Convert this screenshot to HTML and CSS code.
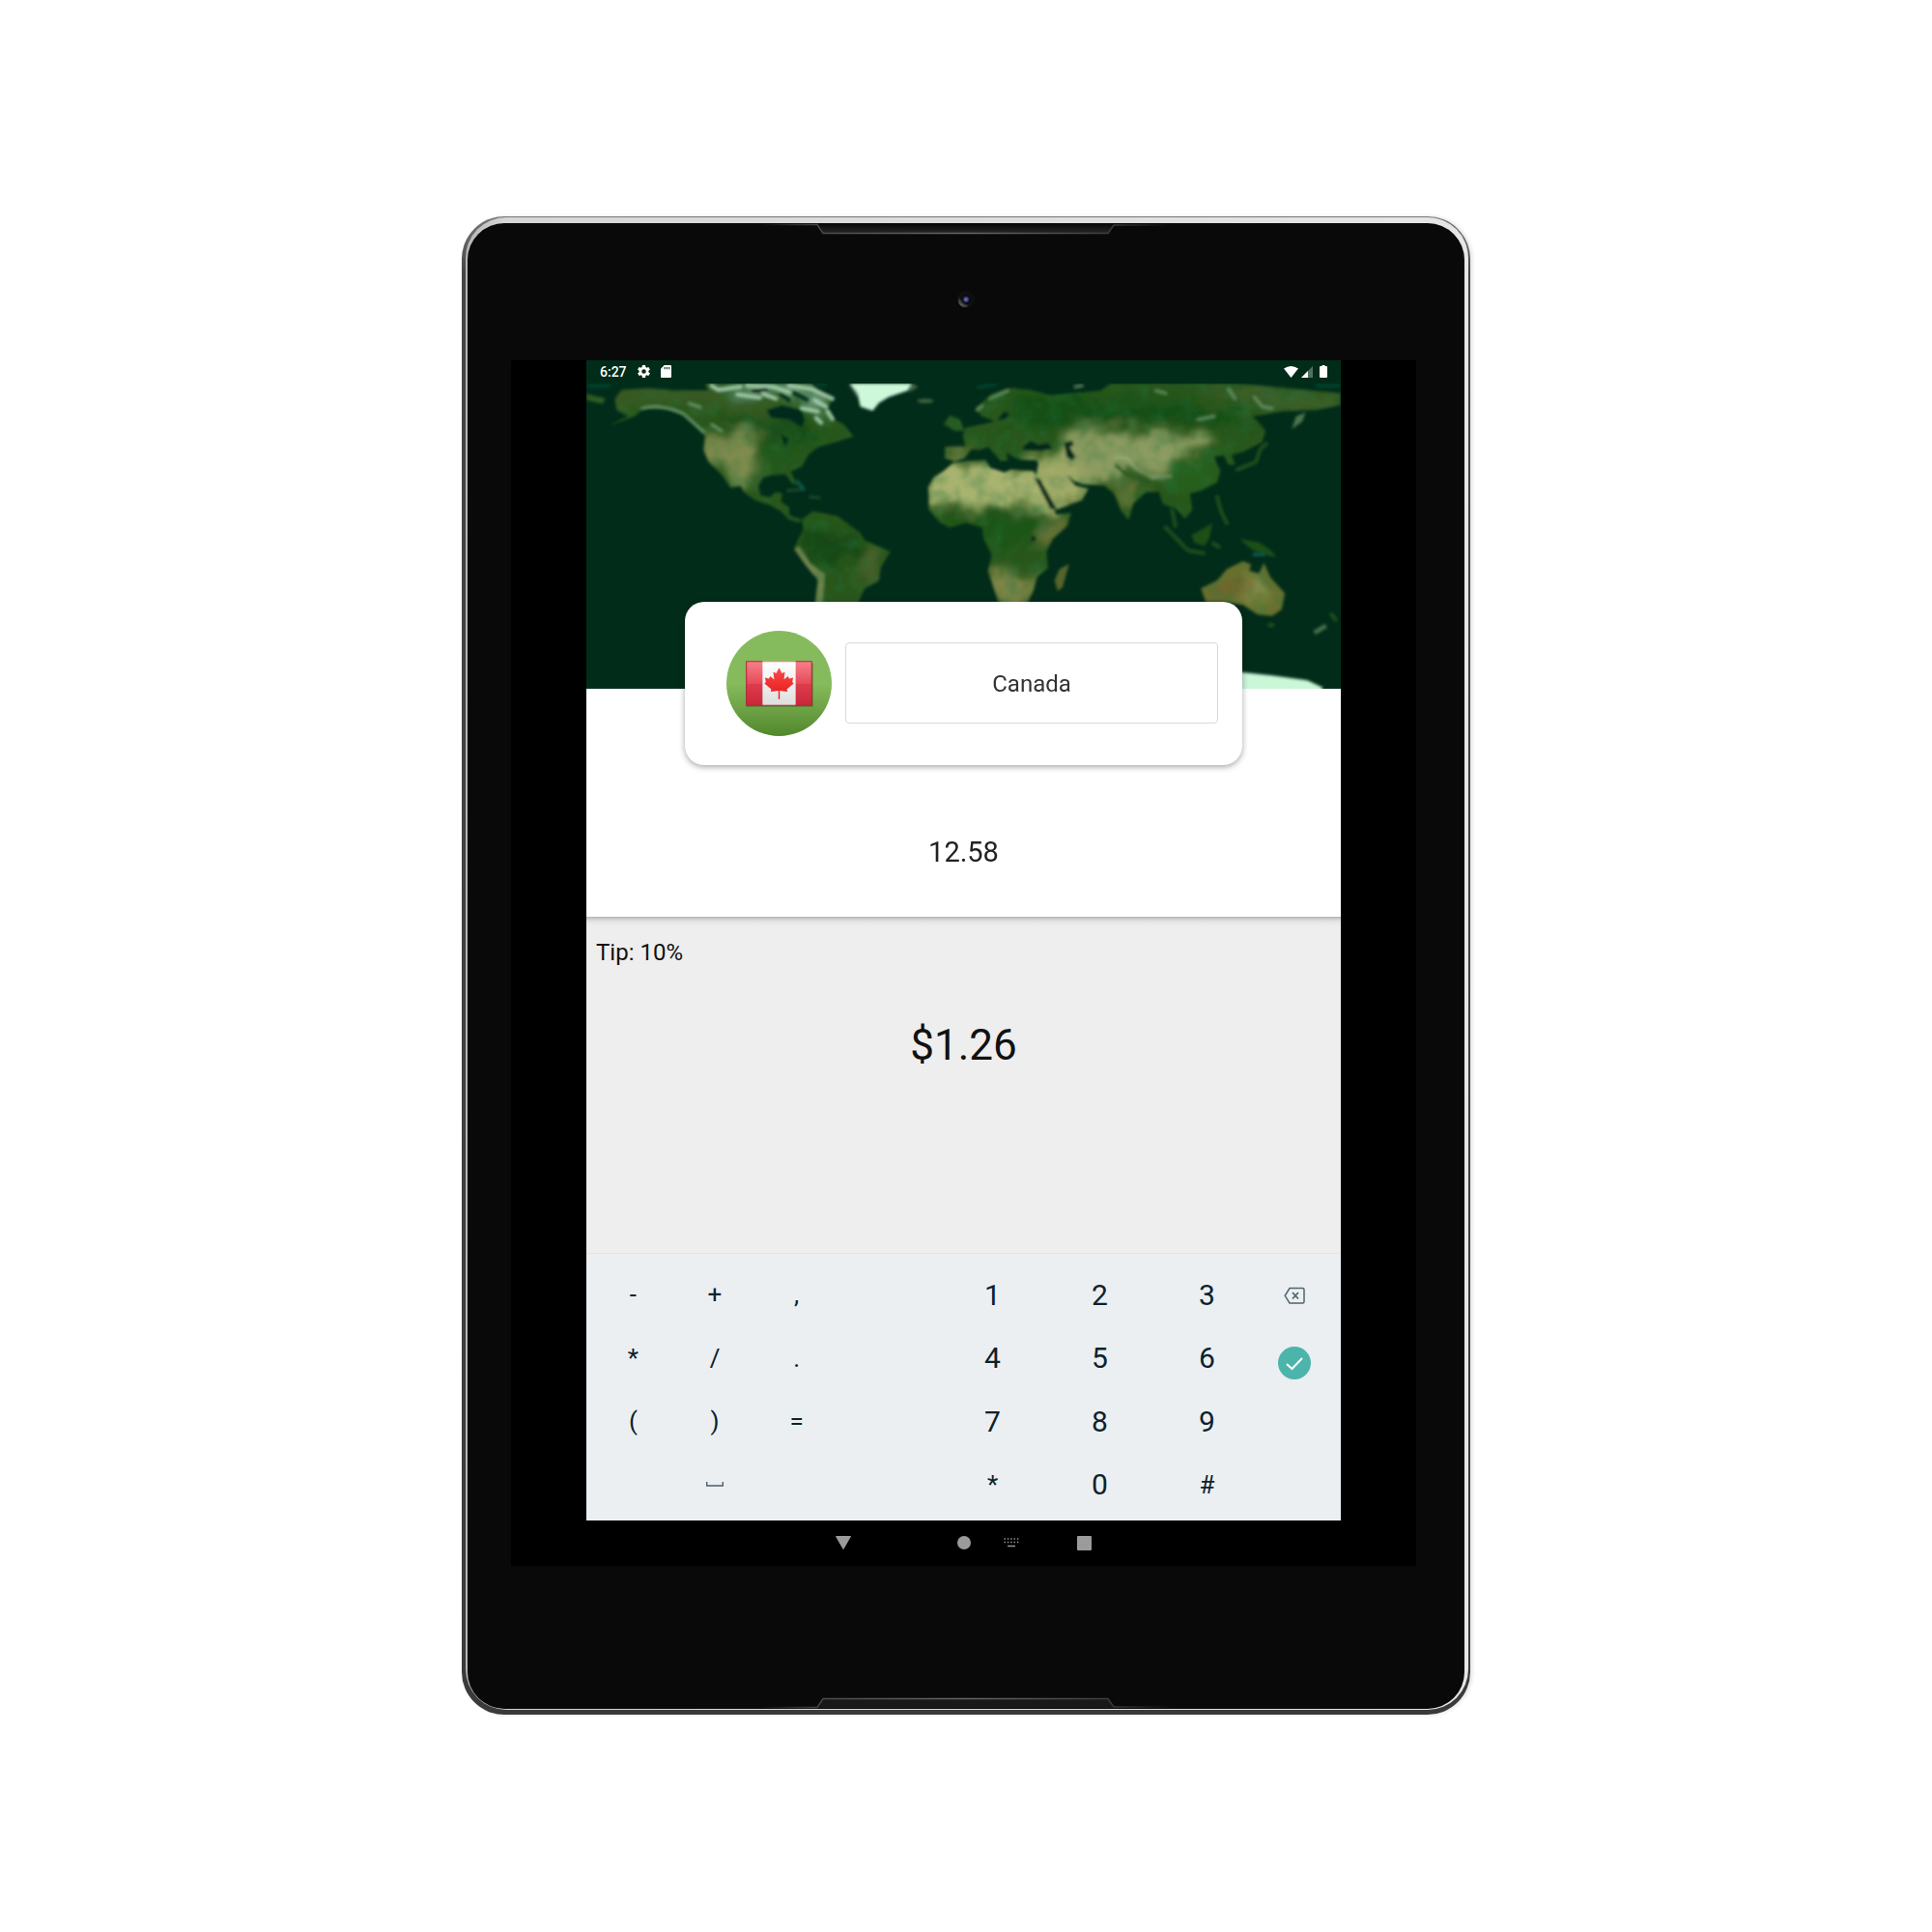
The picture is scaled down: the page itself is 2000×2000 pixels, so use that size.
FILE: index.html
```html
<!DOCTYPE html>
<html lang="en">
<head>
<meta charset="utf-8">
<meta name="viewport" content="width=device-width, initial-scale=1">
<title>Tip calculator</title>
<link rel="stylesheet" href="styles.css">
</head>
<body>
<div class="device">
  <div class="rim">
    <div class="face">
      <div class="bezel bezel-top">
        <svg class="speaker" viewBox="0 0 430 12" width="430" height="12" aria-hidden="true">
          <defs>
            <linearGradient id="grille" x1="0" y1="0" x2="0" y2="1"><stop offset="0" stop-color="#080808"/><stop offset="1" stop-color="#292929"/></linearGradient>
            <linearGradient id="edge"><stop offset="0" stop-color="#090909"/><stop offset=".15" stop-color="#4b4b4b"/><stop offset=".5" stop-color="#666"/><stop offset=".85" stop-color="#3c3c3c"/><stop offset="1" stop-color="#090909"/></linearGradient>
          </defs>
          <path d="M62 1L68 11H362L368 1Z" fill="url(#grille)"/>
          <path d="M2 1.500H61L67 10.500H362L368 2H428" fill="none" stroke="url(#edge)" stroke-width="1.400"/>
        </svg>
        <svg class="camera" viewBox="0 0 20 20" width="20" height="20" aria-hidden="true">
          <defs>
            <linearGradient id="ring" x1="0" y1="1" x2=".7" y2=".2"><stop offset=".1" stop-color="#777"/><stop offset=".6" stop-color="#111"/></linearGradient>
            <radialGradient id="lens"><stop offset="0" stop-color="#7b7fc4"/><stop offset=".6" stop-color="#3b3d7c"/><stop offset="1" stop-color="#15152c"/></radialGradient>
          </defs>
          <circle cx="10" cy="10" r="9" fill="#101010"/>
          <circle cx="9" cy="11" r="7" fill="url(#ring)"/>
          <circle cx="11" cy="9" r="6" fill="#0c0c12"/>
          <circle cx="10" cy="10" r="3.500" fill="url(#lens)"/>
        </svg>
      </div>

      <div class="screen">
        <main class="app">
          <div class="status">
            <span class="clock">6:27</span>
            <svg viewBox="2 2 20 20" width="13" height="13" fill="#fff" aria-hidden="true"><path d="M19.430 12.980c.04-.32.07-.64.07-.98s-.03-.66-.07-.98l2.110-1.650c.19-.15.24-.42.12-.64l-2-3.460c-.12-.22-.39-.3-.61-.22l-2.490 1c-.52-.4-1.080-.73-1.690-.98l-.38-2.650A.488.488 0 0 0 14 2h-4c-.25 0-.46.18-.49.42l-.38 2.650c-.61.25-1.170.59-1.690.98l-2.490-1c-.23-.09-.49 0-.61.22l-2 3.460c-.13.22-.07.49.12.64l2.110 1.650c-.04.32-.07.65-.07.98s.03.66.07.98l-2.110 1.650c-.19.15-.24.42-.12.64l2 3.460c.12.22.39.3.61.22l2.490-1c.52.4 1.080.73 1.690.98l.38 2.650c.03.24.24.42.49.42h4c.25 0 .46-.18.49-.42l.38-2.650c.61-.25 1.170-.59 1.690-.98l2.490 1c.23.09.49 0 .61-.22l2-3.460c.12-.22.07-.49-.12-.64zM12 15.500a3.500 3.500 0 1 1 0-7 3.500 3.500 0 0 1 0 7z"/></svg>
            <svg viewBox="0 0 12 14" width="11" height="13" aria-hidden="true"><path d="M4 0H11Q12 0 12 1V13Q12 14 11 14H1Q0 14 0 13V4Z" fill="#fff"/><path d="M4.500 2V4.500M7 2V4.500M9.500 2V4.500" stroke="#022c1a" stroke-width="1.200"/></svg>
            <span class="signals">
              <svg viewBox="0 0 15 12" width="15" height="12" aria-hidden="true"><path d="M7.500 12L0 2.500Q7.500 -2.500 15 2.500Z" fill="#fff"/></svg>
              <svg viewBox="0 0 12 12" width="12" height="12" aria-hidden="true"><path d="M12 0V12H0Z" fill="#4f6f61"/><path d="M7 5V12H0Z" fill="#fff"/></svg>
            </span>
            <svg viewBox="0 0 8 13" width="8" height="13" aria-hidden="true"><path d="M2.500 0H5.500V1H7Q8 1 8 2V12Q8 13 7 13H1Q0 13 0 12V2Q0 1 1 1H2.500Z" fill="#fff"/></svg>
          </div>

          <svg class="map" viewBox="21 78 2343 948" preserveAspectRatio="xMidYMid slice" role="img" aria-label="World map">
            <defs>
              <filter id="soft" x="-5%" y="-5%" width="110%" height="110%"><feGaussianBlur stdDeviation="5"/></filter>
              <filter id="haze" x="-20%" y="-20%" width="140%" height="140%">
                <feGaussianBlur stdDeviation="18" result="b"/>
                <feTurbulence type="fractalNoise" baseFrequency=".012" numOctaves="3" seed="4" result="n"/>
                <feDisplacementMap in="b" in2="n" scale="90" xChannelSelector="R" yChannelSelector="G"/>
              </filter>
              <filter id="relief" x="0" y="0" width="100%" height="100%">
                <feTurbulence type="fractalNoise" baseFrequency=".022" numOctaves="3" seed="11"/>
                <feColorMatrix values="0 0 0 0 .02  0 0 0 0 .18  0 0 0 0 .05  1.800 0 0 0 -.78"/>
              </filter>
              <clipPath id="land">
                <path d="M21 110L80 125L70 140L21 130ZM110 125L130 98L210 92L300 100L400 100L390 78L720 78L740 100L790 125L770 150L790 190L820 205L850 242L790 262L740 275L710 300L690 335L655 352L677 395L660 388L640 360L600 362L570 370L555 395L562 425L590 432L610 415L630 420L625 445L650 462L652 488L690 500L680 510L650 500L625 475L590 455L545 440L510 415L500 395L470 402L440 360L400 320L385 285L390 240L365 215L330 180L270 155L200 155L170 180L90 210L150 180L115 160Z"/>
                <path d="M690 500L725 475L800 490L870 540L885 565L965 600L935 650L930 690L885 715L860 770L730 770L740 690L700 640L665 590L680 560L695 530Z"/>
                <path d="M1230 155L1280 110L1340 92L1400 98L1460 115L1620 100L1650 78L2040 78L2364 108V145L2290 160L2180 165L2090 180L2110 200L2130 225L2120 260L2060 290L2025 300L2035 330L2015 330L2000 300L1970 305L1990 350L1980 385L1930 410L1895 420L1903 470L1880 497L1850 465L1830 460L1810 450L1800 415L1760 415L1720 450L1705 502L1680 470L1660 420L1630 395L1560 390L1535 380L1510 358L1540 395L1580 405L1560 440L1480 470L1440 420L1415 370L1425 330L1420 316L1370 315L1345 305L1325 292L1330 318L1308 318L1290 298L1270 275L1240 285L1200 278L1190 240L1200 215L1250 205L1290 195L1250 180Z"/>
                <path d="M1160 325L1210 318L1260 315L1275 340L1320 355L1340 345L1410 350L1430 395L1470 460L1480 485L1526 480L1515 520L1470 560L1450 600L1455 650L1420 680L1410 720L1385 770L1305 770L1285 710L1268 660L1280 610L1255 560L1250 525L1200 510L1150 525L1120 510L1085 470L1082 400L1100 370L1130 350Z"/>
                <path d="M1930 715L1980 690L2010 655L2060 630L2085 640L2080 660L2110 668L2125 635L2145 680L2190 730L2180 780L2150 800L2105 795L2060 765L2000 757L1945 757Z"/>
                <path d="M1130 205L1150 178L1180 188L1196 225L1165 225ZM1135 275L1190 272L1215 285L1195 310L1165 320L1135 310ZM1190 235L1260 220L1250 280L1200 285Z"/>
              </clipPath>
            </defs>
            <rect x="21" y="78" width="2343" height="948" fill="#022c1a"/>
            <g filter="url(#soft)">
              <g clip-path="url(#land)">
                <rect x="21" y="78" width="2343" height="700" fill="#29561b"/>
                <rect x="1900" y="620" width="320" height="200" fill="#66702e"/>
                <g filter="url(#haze)">
                  <path d="M21 78H400L650 170L560 180L330 150L21 150Z" fill="#385a20"/>
                  <path d="M440 180L650 200L780 240L700 260L450 215Z" fill="#184c15"/>
                  <path d="M390 235L540 225L560 300L550 420L510 400L400 320Z" fill="#7d8b4e"/>
                  <path d="M560 250L700 260L660 350L570 350Z" fill="#20591a"/>
                  <path d="M400 78H740L790 170L720 160L680 120L560 115Z" fill="#6f9877"/>
                  <path d="M690 510L860 540L860 620L760 650L690 590Z" fill="#174a12"/>
                  <path d="M870 590L950 590L920 690L850 690Z" fill="#48602a"/>
                  <path d="M1340 120L1900 130L2130 200L1900 200L1680 200L1340 200Z" fill="#174f14"/>
                  <path d="M1900 80L2364 100V150L2100 150Z" fill="#3c5f29"/>
                  <path d="M1500 230L1680 220L1740 240L1960 230L1970 260L1860 325L1800 350L1700 350L1640 390L1500 380L1500 300Z" fill="#8c9b60"/>
                  <path d="M1850 310L1990 300V390L1880 420L1800 410Z" fill="#28601d"/>
                  <path d="M1650 390L1750 390L1700 490Z" fill="#657536"/>
                  <path d="M1380 295L1520 310L1600 400L1560 440L1480 475L1430 400Z" fill="#a2aa68"/>
                  <path d="M1070 325H1260L1420 360L1470 470L1370 460L1090 460Z" fill="#a9b370"/>
                  <path d="M1090 495L1420 490L1460 530L1380 590L1270 580L1240 515L1150 530Z" fill="#1d5517"/>
                  <path d="M1440 510L1530 480L1500 530L1420 600Z" fill="#75763a"/>
                  <path d="M1260 660L1380 660L1430 690L1390 780H1300Z" fill="#7f8547"/>
                  <path d="M1130 275H1200V310H1130Z" fill="#71803f"/>
                  <path d="M2070 670L2110 690L2150 770L2050 740Z" fill="#8d9450"/>
                  <path d="M1940 710L2070 690L2090 720L2000 745Z" fill="#76642a"/>
                </g>
                <path d="M672 590L708 645L750 675L742 770" fill="none" stroke="#82905a" stroke-width="22" opacity=".8"/>
                <rect x="21" y="78" width="2343" height="780" filter="url(#relief)" opacity=".5"/>
                <path d="M1660 305L1700 310L1730 345L1780 370L1840 365" fill="none" stroke="#a6c8a0" stroke-width="12" opacity=".3"/>
                <path d="M1665 330Q1700 375 1780 383" fill="none" stroke="#2b5a22" stroke-width="9"/>
              </g>
              <g fill="#022c1a">
                <path d="M580 160L630 145L690 160L700 190L690 215L650 190L595 185Z"/>
                <path d="M1375 275L1400 255L1425 268L1455 262L1470 282L1430 288L1380 286ZM1505 262L1530 255L1535 270L1522 275L1540 305L1530 318L1512 305ZM1412 370L1430 375L1482 468L1462 468ZM1318 165L1338 172L1320 190L1295 192Z"/>
                <path d="M625 235L650 250L640 275L632 260Z"/>
                <circle cx="1409" cy="560" r="8"/>
              </g>
              <path d="M1030 78L1052 88L1025 105ZM835 80L865 90L860 120Z" fill="#47664a"/>
              <path d="M840 78H1030L1020 100L960 120L930 138L910 163L872 150L862 105Z" fill="#cdf8da"/>
              <ellipse cx="1074" cy="132" rx="25" ry="7" fill="#3d6040"/>
              <path d="M2212 220L2225 180L2254 168L2245 195Z" fill="#4b744b"/>
              <path d="M1475 690L1490 655L1520 638L1500 710L1485 722Z" fill="#54652c"/>
              <path d="M1900 550L1965 512L1955 560L1940 582L1910 572ZM2050 560L2110 572L2145 595L2165 618L2110 605L2080 588Z" fill="#1d4f17"/>
              <path d="M2282 852L2318 830" stroke="#456f4c" stroke-width="14"/>
              <ellipse cx="2147" cy="828" rx="11" ry="7" fill="#21491f"/>
              <path d="M2030 972L2150 985L2260 1000L2308 1022L2300 1040H2030Z" fill="#caf7d7"/>
            </g>
            <g filter="url(#soft)" fill="none" stroke-linecap="round" stroke-linejoin="round">
              <path d="M195 155Q250 140 320 170L385 228M410 205L440 225M340 140L375 152" stroke="#6d9a75" stroke-width="10" opacity=".8"/>
              <path d="M410 85L430 98L500 88M490 112L560 122M520 85L600 88L650 105M570 110L610 125M650 85L720 95L785 125M730 130L765 150M690 155L740 165M770 165L785 188M735 185L750 200" stroke="#a9d3b5" stroke-width="13" opacity=".85"/>
              <path d="M540 100L580 98M625 112L650 130M665 108L705 128" stroke="#05331f" stroke-width="13"/>
              <path d="M1235 160L1250 148M1275 125L1330 100M1540 88L1560 85M2095 120L2120 150L2150 155M2015 95L2035 125M1920 190L1970 180M1790 100L1820 108" stroke="#6d9a72" stroke-width="11" opacity=".7"/>
              <path d="M2042 345L2100 322L2115 280L2132 266M1820 525L1885 592M1890 597L1938 605M1840 470L1850 520M1980 430L1990 470L2010 512M1968 575L1985 585M2335 795L2348 812" stroke="#1f501e" stroke-width="12"/>
              <path d="M645 410L690 408M715 430L745 433" stroke="#2c5a31" stroke-width="7" opacity=".8"/>
              <path d="M675 382L695 405M2095 608L2125 608" stroke="#0b5546" stroke-width="12"/>
              <path d="M30 85H90M740 78L760 82M1290 80L1240 90M2290 84H2360" stroke="#06402c" stroke-width="14"/>
            </g>
          </svg>

          <form class="form">
            <div class="card">
              <svg class="flag" viewBox="0 0 108 108" width="109" height="109" role="img" aria-label="Flag of Canada">
                <defs>
                  <linearGradient id="disc" x1="0" y1="0" x2="0" y2="1"><stop offset=".5" stop-color="#86bb5d"/><stop offset="1" stop-color="#52882c"/></linearGradient>
                  <linearGradient id="band" x1="0" y1="0" x2="0" y2="1"><stop offset="0" stop-color="#f9808b"/><stop offset=".5" stop-color="#e64b59"/><stop offset=".52" stop-color="#de3c4b"/><stop offset="1" stop-color="#c92639"/></linearGradient>
                  <linearGradient id="cloth" x1="0" y1="0" x2="0" y2="1"><stop offset="0" stop-color="#fff"/><stop offset="1" stop-color="#dedede"/></linearGradient>
                  <linearGradient id="leaf" x1="0" y1="0" x2="0" y2="1"><stop offset="0" stop-color="#fb4b4b"/><stop offset="1" stop-color="#e31717"/></linearGradient>
                </defs>
                <circle cx="54" cy="54" r="54" fill="url(#disc)"/>
                <rect x="20" y="33" width="69" height="45" rx="1" fill="#35591f" opacity=".45"/>
                <rect x="20" y="31" width="68" height="46" fill="url(#band)"/>
                <rect x="37" y="32" width="34" height="44" fill="url(#cloth)"/>
                <path d="M37 31.500H20.500V76.500H37M71 31.500H87.500V76.500H71" fill="none" stroke="#a92d3a"/>
                <path d="M54 38L57 43.500L60 42L59 50L63 46.500L64.500 49L68.500 48L67.500 52.500L69 54L62 60L62.500 62.500L54.700 61.500V70H53.300V61.500L45.500 62.500L46 60L39 54L40.500 52.500L39.500 48L43.500 49L45 46.500L49 50L48 42L51 43.500Z" fill="url(#leaf)"/>
              </svg>
              <button class="country" type="button">Canada</button>
            </div>
            <input class="bill" type="text" inputmode="decimal" aria-label="Bill amount" value="12.58">
          </form>

          <section class="result">
            <p class="tip">Tip: 10%</p>
            <p class="amount">$1.26</p>
          </section>

          <div class="keyboard">
            <div class="keys symbols">
              <button type="button">-</button><button type="button">+</button><button type="button">,</button>
              <button type="button">*</button><button type="button">/</button><button type="button">.</button>
              <button type="button">(</button><button type="button">)</button><button type="button">=</button>
              <button class="space" type="button" aria-label="Space"><svg viewBox="0 0 18 5" width="18" height="5"><path d="M.7 0V4H17.300V0" fill="none" stroke="#4c5f67" stroke-width="1.400"/></svg></button>
            </div>
            <div class="keys digits">
              <button type="button">1</button><button type="button">2</button><button type="button">3</button>
              <button type="button">4</button><button type="button">5</button><button type="button">6</button>
              <button type="button">7</button><button type="button">8</button><button type="button">9</button>
              <button class="sign" type="button">*</button><button type="button">0</button><button class="sign" type="button">#</button>
            </div>
            <div class="actions">
              <button class="erase" type="button" aria-label="Backspace"><svg viewBox="0 0 22 18" width="22" height="18" fill="none" stroke="#51646c" stroke-width="1.500"><path d="M6 1.500H19.500Q21 1.500 21 3V15.500Q21 17 19.500 17H6L1.200 9.300Z"/><path d="M9 6L15 12.500M15 6L9 12.500" stroke-width="1.800"/></svg></button>
              <button class="enter" type="button" aria-label="Done"><svg viewBox="0 0 34 34" width="34" height="34" fill="none" stroke="#fff" stroke-width="2"><path d="M9 18L14.500 23L25 12"/></svg></button>
            </div>
          </div>

          <nav class="navbar">
            <button class="back" type="button" aria-label="Back"><svg viewBox="0 0 16 14" width="16" height="14"><path d="M.5 .5H15.500L8 13.500Z" fill="#9b9b9b" stroke="#9b9b9b" stroke-linejoin="round"/></svg></button>
            <button class="home" type="button" aria-label="Home"><svg viewBox="0 0 14 14" width="14" height="14"><circle cx="7" cy="7" r="7" fill="#9b9b9b"/></svg></button>
            <button class="ime" type="button" aria-label="Switch keyboard"><svg viewBox="0 0 16 10" width="16" height="10" stroke="#9b9b9b"><path d="M.5 1H16M.5 4.500H16" stroke-width="1.400" stroke-dasharray="1.400 1.950"/><path d="M4 8.500H12" stroke-width="1.400"/></svg></button>
            <button class="recent" type="button" aria-label="Recent apps"><svg viewBox="0 0 15 15" width="15" height="15"><rect width="15" height="15" rx="1" fill="#9b9b9b"/></svg></button>
          </nav>
        </main>
      </div>

      <div class="bezel bezel-bottom">
        <svg class="speaker" viewBox="0 0 430 12" width="430" height="12" aria-hidden="true">
          <path d="M62 11L68 1H362L368 11Z" fill="#191919"/>
          <path d="M2 10.500H61L67 1.500H362L368 10H428" fill="none" stroke="url(#edge)" stroke-width="1.400"/>
        </svg>
      </div>
    </div>
  </div>
</div>
</body>
</html>
```
FILE: styles.css
```css
* {
  box-sizing: border-box;
}

body {
  margin: 0;
  min-height: 100vh;
  padding-bottom: 2px;
  display: grid;
  align-content: center;
  justify-items: center;
  background: #fff;
  color: #111;
  font-family: Roboto, "Liberation Sans", sans-serif;
}

button,
input {
  margin: 0;
  padding: 0;
  border: 0;
  background: none;
  color: inherit;
  font: inherit;
}

p {
  margin: 0;
}

svg {
  display: block;
  flex: none;
}

/* Tablet shell */
.device {
  width: 52.2%;
  min-width: 680px;
  padding: 1px 2px 5px 4px;
  border-radius: 44px;
  background: linear-gradient(#777, #444 60px, #3a3a3a);
  box-shadow: 2px 0 4px rgba(0, 0, 0, 0.12);
}

.rim {
  padding: 6px 4px 1px 2px;
  border-radius: 42px;
  background: linear-gradient(90deg, #b5b5b5, #d6d6d6 40px, #e6e6e6);
}

.face {
  display: flex;
  flex-direction: column;
  border-radius: 38px;
  background: #090909;
}

.bezel {
  display: flex;
  flex-direction: column;
  align-items: center;
}

.bezel-top {
  gap: 57px;
  padding-bottom: 53px;
}

.bezel-bottom {
  padding-top: 136px;
}

.screen {
  margin: 0 50px 0 45px;
  padding: 0 78px;
  background: #000;
}

.app {
  display: flex;
  flex-direction: column;
}

/* Status bar */
.status {
  display: flex;
  align-items: center;
  height: 24px;
  padding: 0 14px;
  gap: 11px;
  background: #022c1a;
  color: #fff;
}

.clock {
  font-size: 14px;
  line-height: 24px;
  font-weight: 500;
}

.signals {
  display: flex;
  align-items: center;
  gap: 3px;
  margin: 0 -4px 0 auto;
}

.map {
  width: 100%;
  height: 316px;
}

/* Bill entry */
.form {
  display: flex;
  flex-direction: column;
  margin-top: -90px;
  background: linear-gradient(transparent 90px, #fff 90px);
}

.card {
  display: flex;
  align-items: center;
  gap: 14px;
  margin: 0 102px;
  padding: 30px 25px 30px 43px;
  border-radius: 20px;
  background: #fff;
  box-shadow: 0 2px 6px rgba(0, 0, 0, 0.35);
}

.country {
  flex: 1;
  height: 84px;
  padding-top: 2px;
  border: 1px solid #d9d9d9;
  border-radius: 4px;
  font-size: 24px;
  color: #333;
}

.bill {
  width: 100%;
  height: 157px;
  padding-top: 24px;
  font-size: 29px;
  text-align: center;
  color: #222;
}

/* Result, shaded along the top by the raised form */
.result {
  height: 348px;
  padding: 21px 10px;
  background: linear-gradient(#b4b4b4, #d6d6d6 3px, #e8e8e8 6px, #eee 10px);
}

.tip {
  font-size: 24px;
  line-height: 32px;
}

.amount {
  margin-top: 54px;
  font-size: 44px;
  line-height: 52px;
  text-align: center;
}

/* Keyboard */
.keyboard {
  display: grid;
  grid-template-columns: 254fr 105fr 333fr 70fr;
  height: 277px;
  padding: 10px 13px 4px 6px;
  border-top: 1px solid #e3e5e6;
  background: #ebeff2;
  color: #0c222c;
}

.keys {
  display: grid;
  grid-template-columns: repeat(3, 1fr);
  grid-template-rows: repeat(4, 1fr);
}

.symbols,
.keys .sign {
  font-size: 26px;
}

.digits {
  grid-column: 3;
  font-size: 30px;
}

.space {
  grid-column: 2;
  display: grid;
  place-items: center;
}

.actions {
  display: flex;
  flex-direction: column;
  align-items: center;
  gap: 20px;
}

.erase {
  display: grid;
  place-items: center;
  width: 65px;
  height: 66px;
}

.enter {
  width: 34px;
  height: 34px;
  border-radius: 50%;
  background: #4bb5ab;
}

/* System navigation */
.navbar {
  display: grid;
  grid-template-columns: 203fr 125fr 38fr 49fr 49fr 103fr 214fr;
  height: 47px;
}

.navbar button {
  display: grid;
  place-items: center;
  grid-row: 1;
}

.back {
  grid-column: 2;
}

.home {
  grid-column: 4;
}

.ime {
  grid-column: 5;
}

.recent {
  grid-column: 6;
}
```
